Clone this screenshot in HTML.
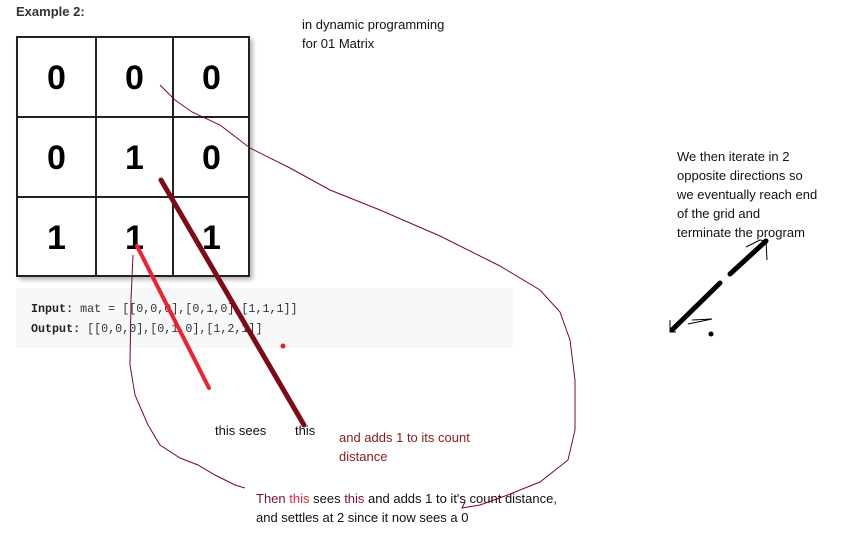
<!DOCTYPE html>
<html><head><meta charset="utf-8"><style>
body{margin:0;width:847px;height:548px;background:#fff;position:relative;overflow:hidden;font-family:"Liberation Sans",sans-serif}
.t{position:absolute;font-size:13px;line-height:19px;color:#111;white-space:nowrap}
.grid{position:absolute;left:16px;top:36px;width:234px;height:241px;border:2px solid #222;box-shadow:3px 3px 4px #bbb;box-sizing:border-box}
.c{position:absolute;font-weight:bold;font-size:34px;color:#000;width:77px;text-align:center}
.code{position:absolute;left:16px;top:288px;width:497px;height:60px;background:#f7f8fa;font-family:"Liberation Mono",monospace;font-size:11.7px;color:#333}
</style></head><body>
<div class="t" style="left:16px;top:2px;font-weight:bold;color:#333">Example 2:</div>
<div class="t" style="left:302px;top:15px">in dynamic programming<br>for 01 Matrix</div>
<div class="grid">
<div style="position:absolute;left:77px;top:0;width:2px;height:100%;background:#222"></div>
<div style="position:absolute;left:154px;top:0;width:2px;height:100%;background:#222"></div>
<div style="position:absolute;top:78px;left:0;height:2px;width:100%;background:#222"></div>
<div style="position:absolute;top:158px;left:0;height:2px;width:100%;background:#222"></div>
<div class="c" style="left:0;top:21px">0</div><div class="c" style="left:78px;top:21px">0</div><div class="c" style="left:155px;top:21px">0</div>
<div class="c" style="left:0;top:101px">0</div><div class="c" style="left:78px;top:101px">1</div><div class="c" style="left:155px;top:101px">0</div>
<div class="c" style="left:0;top:181px">1</div><div class="c" style="left:78px;top:181px">1</div><div class="c" style="left:155px;top:181px">1</div>
</div>
<div class="code"><div style="position:absolute;left:15px;top:14px"><b style="color:#222">Input:</b> mat = [[0,0,0],[0,1,0],[1,1,1]]</div><div style="position:absolute;left:15px;top:34px"><b style="color:#222">Output:</b> [[0,0,0],[0,1,0],[1,2,1]]</div></div>
<div class="t" style="left:677px;top:147px">We then iterate in 2<br>opposite directions so<br>we eventually reach end<br>of the grid and<br>terminate the program</div>
<div class="t" style="left:215px;top:421px">this sees</div>
<div class="t" style="left:295px;top:421px">this</div>
<div class="t" style="left:339px;top:428px;color:#8b1a1a">and adds 1 to its count<br>distance</div>
<div class="t" style="left:256px;top:489px"><span style="color:#7a1530">Then</span> <span style="color:#e8283a">this</span> sees <span style="color:#8b1030">this</span> and adds 1 to it's count distance,<br>and settles at 2 since it now sees a 0</div>
<svg width="847" height="548" style="position:absolute;left:0;top:0">
<path d="M160 85 L175 100 L192 112 L220 125 L250 148 L290 168 L330 190 L380 210 L440 236 L500 266 L540 290 L560 312 L570 340 L575 380 L575 430 L568 460 L540 482 L505 496 L480 505 L462 508 L465 502" fill="none" stroke="#7a0a1a" stroke-width="1"/>
<path d="M133 255 L131 300 L130 365 L135 395 L148 425 L160 445 L180 458 L198 465 L215 475 L235 485 L245 488" fill="none" stroke="#7a0a1a" stroke-width="1"/>
<line x1="161" y1="180" x2="304" y2="425" stroke="#7d0a16" stroke-width="5" stroke-linecap="round"/>
<line x1="137" y1="246" x2="209" y2="388" stroke="#ee2230" stroke-width="4" stroke-linecap="round"/>
<circle cx="283" cy="346" r="2.5" fill="#e81c24"/>
<line x1="672" y1="330" x2="720" y2="283" stroke="#000" stroke-width="5" stroke-linecap="round"/>
<line x1="730" y1="274" x2="766" y2="241" stroke="#000" stroke-width="5" stroke-linecap="round"/>
<path d="M670 320 L670 332 L676 332 M688 324 L712 319 L692 320" fill="none" stroke="#000" stroke-width="1"/>
<path d="M746 247 L760 240 L766 241 L767 260" fill="none" stroke="#000" stroke-width="1"/>
<circle cx="711" cy="334" r="2.5" fill="#000"/>
</svg>
</body></html>
